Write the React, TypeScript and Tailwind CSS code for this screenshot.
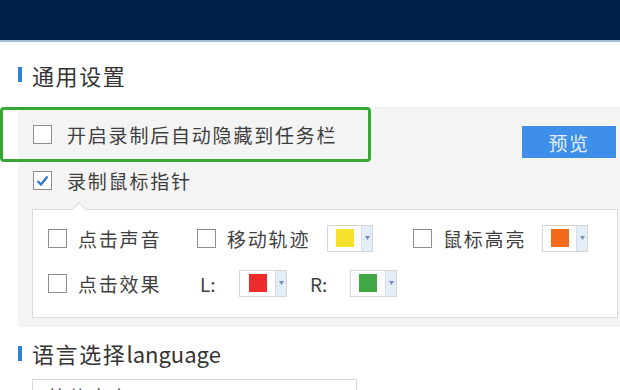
import React from "react";

function Box({ checked = false }: { checked?: boolean }) {
  return (
    <div className="w-[19px] h-[19px] shrink-0 border border-[#8e8e8e] bg-white flex items-center justify-center">
      {checked && (
        <svg width="13" height="11" viewBox="0 0 13 11">
          <path d="M1.5 6 L5 9.5 L11.5 1.5" fill="none" stroke="#2b74d4" strokeWidth="2.2" />
        </svg>
      )}
    </div>
  );
}

function Picker({ color, w = "w-[46px]" }: { color: string; w?: string }) {
  return (
    <div className={`${w} h-[27px] shrink-0 flex border border-[#d6d6d6] bg-white`}>
      <div className="flex-1 flex items-center justify-center">
        <div className="w-[18px] h-[18px]" style={{ backgroundColor: color }} />
      </div>
      <div className="w-[11px] bg-[#e4ecf6] border-l border-[#d6dde8] flex items-center justify-center">
        <svg width="5" height="4" viewBox="0 0 5 4">
          <path d="M0 0 H5 L2.5 4 Z" fill="#6f8fbf" />
        </svg>
      </div>
    </div>
  );
}

function Title({ cn, en }: { cn: string; en?: string }) {
  return (
    <div className="flex items-center pl-[18px]">
      <div className="w-[4px] h-[15px] bg-[#2f80d9]" />
      <div className="ml-[10px] text-[22px] text-[#333] leading-none">
        <span className="tracking-[1.6px]">{cn}</span>
        {en}
      </div>
    </div>
  );
}

export default function App() {
  return (
    <div className="relative w-[620px] h-[390px] overflow-hidden bg-white font-['Noto_Sans_CJK_SC','Noto_Sans',sans-serif] text-[#3f3f3f]">
      <div className="h-[42px] bg-[#02204a] border-b-2 border-[#a3bad6]" />

      <div className="h-[65px] flex items-center">
        <Title cn="通用设置" />
      </div>

      <div className="ml-[18px] bg-[#f4f4f4] pt-[18px] pb-[9px]">
        <div className="h-[46px] flex items-start pl-[15px] pr-[4px]">
          <Box />
          <span className="ml-[15px] text-[19px] leading-[19px] tracking-[1.8px]">开启录制后自动隐藏到任务栏</span>
          <button className="ml-auto mt-[1px] w-[94px] h-[32px] bg-[#3d8fe9] text-[#e3eefb] text-[19px] tracking-[1.5px] leading-none">
            预览
          </button>
        </div>

        <div className="h-[38px] flex items-start pl-[15px]">
          <Box checked />
          <span className="ml-[15px] text-[19px] leading-[19px] tracking-[1.8px]">录制鼠标指针</span>
        </div>

        <div className="relative ml-[14px] mr-[2px] border border-[#dadada] bg-white pt-[14px] pb-[20px] pl-[15px] text-[19px] tracking-[1.8px]">
          <div className="absolute -top-[6px] left-[41px] w-[10px] h-[10px] rotate-45 bg-white border-l border-t border-[#dadada]" />

          <div className="h-[28px] flex items-center">
            <div className="w-[149px] flex items-center">
              <Box />
              <span className="ml-[11px] leading-none">点击声音</span>
            </div>
            <div className="w-[130px] flex items-center">
              <Box />
              <span className="ml-[11px] leading-none">移动轨迹</span>
            </div>
            <Picker color="#f6e12c" />
            <div className="ml-[40px] w-[129px] flex items-center">
              <Box />
              <span className="ml-[11px] leading-none">鼠标高亮</span>
            </div>
            <Picker color="#f26b1d" />
          </div>

          <div className="mt-[17px] h-[28px] flex items-center">
            <div className="w-[152px] flex items-center">
              <Box />
              <span className="ml-[11px] leading-none">点击效果</span>
            </div>
            <span className="w-[39px] leading-none tracking-normal">L:</span>
            <Picker color="#ef2c2c" w="w-[48px]" />
            <span className="ml-[23px] w-[40px] leading-none tracking-normal">R:</span>
            <Picker color="#41a845" w="w-[47px]" />
          </div>
        </div>
      </div>

      <div className="h-[52px] flex items-center">
        <Title cn="语言选择" en="language" />
      </div>

      <div className="ml-[32px] w-[325px] h-[40px] border border-[#d8d8d8] bg-white pt-[7px] pl-[15px] text-[19px] tracking-[1.6px] leading-none">
        简体中文
      </div>

      <div className="absolute left-0 top-[107px] w-[371px] h-[55px] border-[3px] border-[#35a834] rounded-[4px]" />
    </div>
  );
}
